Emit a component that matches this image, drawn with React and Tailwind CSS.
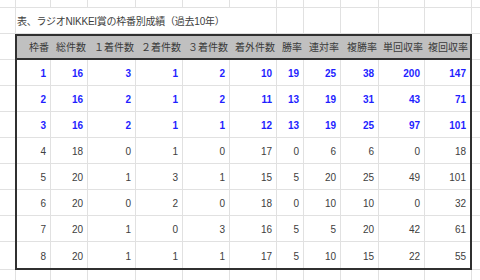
import React from 'react';

const font = "font-['Liberation_Sans','Noto_Sans_CJK_JP',sans-serif]";

// column widths outside the table (A .. L), M takes the rest
const outerCols = ['w-[16px]', 'w-[35px]', 'w-[37px]', 'w-[48px]', 'w-[47px]', 'w-[47px]', 'w-[47px]', 'w-[27px]', 'w-[37px]', 'w-[38px]', 'w-[46px]', 'w-[47px]'];
// column widths inside the bordered table (B .. L)
const innerCols = ['w-[34px]', 'w-[37px]', 'w-[48px]', 'w-[47px]', 'w-[47px]', 'w-[47px]', 'w-[27px]', 'w-[37px]', 'w-[38px]', 'w-[46px]', 'w-[45px]'];

const headers = ['枠番', '総件数', '１着件数', '２着件数', '３着件数', '着外件数', '勝率', '連対率', '複勝率', '単回収率', '複回収率'];

const rows = [
  [1, 16, 3, 1, 2, 10, 19, 25, 38, 200, 147],
  [2, 16, 2, 1, 2, 11, 13, 19, 31, 43, 71],
  [3, 16, 2, 1, 1, 12, 13, 19, 25, 97, 101],
  [4, 18, 0, 1, 0, 17, 0, 6, 6, 0, 18],
  [5, 20, 1, 3, 1, 15, 5, 20, 25, 49, 101],
  [6, 20, 0, 2, 0, 18, 0, 10, 10, 0, 32],
  [7, 20, 1, 0, 3, 16, 5, 5, 20, 42, 61],
  [8, 20, 1, 1, 1, 17, 5, 10, 15, 22, 55],
];

const GridRow = ({ h }) => (
  <div className={`flex ${h}`}>
    {outerCols.map((w, i) => (
      <div key={i} className={`${w} shrink-0 border-r border-b border-[#e1e1e1]`} />
    ))}
    <div className="flex-1 border-b border-[#e1e1e1]" />
  </div>
);

export default function App() {
  return (
    <div className={`w-[480px] h-[280px] overflow-hidden bg-white ${font}`}>
      {/* top partial row */}
      <GridRow h="h-[8px]" />

      {/* title row */}
      <div className="flex h-[26px]">
        <div className="w-[16px] shrink-0 border-r border-b border-[#e1e1e1]" />
        <div className="w-[261px] shrink-0 border-r border-b border-[#e1e1e1] flex items-end pb-[4px] pl-[1px] text-[10px] leading-[14px] tracking-[-0.25px] text-[#404040] whitespace-nowrap">
          表、ラジオNIKKEI賞の枠番別成績（過去10年）
        </div>
        {outerCols.slice(7).map((w, i) => (
          <div key={i} className={`${w} shrink-0 border-r border-b border-[#e1e1e1]`} />
        ))}
        <div className="flex-1 border-b border-[#e1e1e1]" />
      </div>

      {/* table section */}
      <div className="flex">
        <div className="w-[15px] shrink-0 flex flex-col">
          {Array.from({ length: 8 }).map((_, i) => (
            <div key={i} className="h-[26px] border-b border-[#e1e1e1]" />
          ))}
          <div className="h-[28px] border-b border-[#e1e1e1]" />
        </div>

        <div className="shrink-0 border-2 border-[#303030]">
          <div className="flex h-[24px] bg-[#c0c0c0] border-b-2 border-[#303030]">
            {headers.map((t, i) => (
              <div key={i} className={`${innerCols[i]} shrink-0 flex items-center justify-end pr-[2px] text-[10px] text-[#3a3a3a] whitespace-nowrap`}>
                {t}
              </div>
            ))}
          </div>
          {rows.map((r, ri) => (
            <div key={ri} className={`flex h-[26px] ${ri < rows.length - 1 ? 'border-b border-[#e1e1e1]' : ''}`}>
              {r.map((v, ci) => (
                <div
                  key={ci}
                  className={`${innerCols[ci]} shrink-0 flex items-center justify-end pr-[4px] pt-[2px] text-[10px] ${ci < r.length - 1 ? 'border-r border-[#e1e1e1]' : ''} ${ri < 3 ? 'font-bold text-[#1f1fff]' : 'text-[#404040]'}`}
                >
                  {v}
                </div>
              ))}
            </div>
          ))}
        </div>

        <div className="flex-1 flex flex-col">
          {Array.from({ length: 8 }).map((_, i) => (
            <div key={i} className="h-[26px] border-b border-[#e1e1e1]" />
          ))}
          <div className="h-[28px] border-b border-[#e1e1e1]" />
        </div>
      </div>

      {/* bottom partial row */}
      <GridRow h="h-[26px]" />
    </div>
  );
}
